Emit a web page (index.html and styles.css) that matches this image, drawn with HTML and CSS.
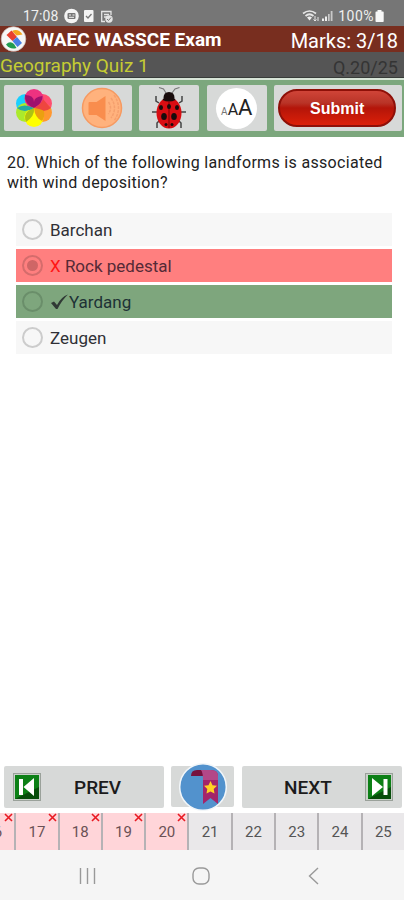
FILE: index.html
```html
<!DOCTYPE html>
<html lang="en">
<head>
<meta charset="utf-8">
<title>WAEC WASSCE Exam</title>
<link rel="stylesheet" href="styles.css">
</head>
<body>
<div class="app">
  <div class="status">
    <span class="time">17:08</span>
    <svg class="status-icons" width="50" height="16" viewBox="0 0 50 16">
      <circle cx="7.500" cy="8" r="7.300" fill="#f4f4f4"/><rect x="3.500" y="5" width="8" height="6" rx="1" fill="#777"/><path d="M5 7h2M8.500 7h2M5 9.300h5" stroke="#f4f4f4"/>
      <rect x="20" y="2" width="9.500" height="12" rx="1" fill="#f4f4f4"/><path d="M22 8l2 2 3.500-4" fill="none" stroke="#777" stroke-width="1.300"/>
      <path d="M47 7V3.500H37.700v10H41M40 6.500h5M40 9h3" fill="none" stroke="#e4e4e4" stroke-width="1.300"/><circle cx="45" cy="11" r="3.700" fill="#e4e4e4"/><path d="M43 11l1.500 1.500 2.500-3" fill="none" stroke="#777"/>
    </svg>
    <svg class="signal" width="32" height="14" viewBox="0 0 32 14">
      <path d="M1 4.500Q7.500-.5 14 4.500M3.500 7Q7.500 3.500 11.500 7" fill="none" stroke="#e6e6e6" stroke-width="1.700"/><path d="M5 8.500Q7.500 6.500 10 8.500L7.500 11.500z" fill="#eee"/><path d="M13 7v5M11.500 10.500l1.500 1.500 1.500-1.500M16 12V8" fill="none" stroke="#e6e6e6"/>
      <path d="M20 12v-2.500h2V12zM23 12V7.500h2V12z" fill="#eee"/><path d="M26 12V5h1.700v7zM28.700 12V2h1.800v10z" fill="#c8c8c8"/>
    </svg>
    <span class="pct">100%</span>
    <svg width="9" height="14" viewBox="0 0 9 14"><path d="M2.500 1h4v1.500H8q.7 0 .7.700v9q0 .8-.7.800H1.300q-.8 0-.8-.8v-9q0-.7.800-.7h1.200z" fill="#f7f7f7"/></svg>
  </div>
  <div class="title">
    <svg width="27" height="26" viewBox="0 0 27 26">
      <circle cx="13.500" cy="13" r="12.300" fill="#f7f7f5" stroke="#c9bdb8" stroke-width=".7"/>
      <path d="M12 5Q18 2 22.500 8.500L16.500 9.500z" fill="#f6a51c"/><path d="M6.500 9L11.500 4.500 17 11 12.500 15z" fill="#e8402e"/>
      <path d="M12.500 15L17 11 22 17 17.500 21z" fill="#477fe4"/><path d="M6 18.500Q10 14.500 14 18L16.500 22Q10 24 6 18.500z" fill="#219c50"/>
    </svg>
    <span class="app-name">WAEC WASSCE Exam</span>
    <span class="marks">Marks: 3/18</span>
  </div>
  <div class="subtitle"><span class="quiz">Geography Quiz 1</span><span class="count">Q.20/25</span></div>
  <div class="toolbar">
    <button class="tool">
      <svg width="40" height="42" viewBox="0 0 40 42">
        <circle cx="11.500" cy="16.500" r="9.500" fill="#19cfff"/><circle cx="28.500" cy="16.500" r="9.500" fill="#ff4f70"/><circle cx="28.500" cy="25.500" r="9.500" fill="#ff9830"/><circle cx="11.500" cy="25.500" r="9.500" fill="#abea2c"/><circle cx="20" cy="30.500" r="9.500" fill="#ffff00"/><circle cx="20" cy="11.500" r="9.500" fill="#ee3280"/>
        <path d="M20 21Q10 17 11 8 20 8 20 15 20 10 28.500 9 29 16 20 21z" fill="#9f116d"/><path d="M20 21Q28 17 29 12 34 18 37 21 30 27 20 21z" fill="#ee4640"/><path d="M20 21Q27 22 30 24 31 30 28 34 21 31 20 21z" fill="#eba010"/><path d="M20 21Q21 29 12 35 8 25 20 21z" fill="#aec312"/><path d="M20 21Q10 27 3 21 10 16 20 21z" fill="#24a8a2"/>
      </svg>
    </button>
    <button class="tool">
      <svg width="42" height="42" viewBox="0 0 42 42"><circle cx="21" cy="21" r="19.500" fill="#ffb27d" stroke="#f69a61" stroke-width="1.500"/><path d="M8.500 15h7l9-6v25l-9-6h-7q-1 0-1-1V16q0-1 1-1z" fill="#f98d4d"/><path d="M27.500 15q4 6 0 12M30 11q7 10 0 20M33 8q9 13 0 26" fill="none" stroke="#f5a06e" stroke-width="1.500" stroke-dasharray="3 1"/></svg>
    </button>
    <button class="tool">
      <svg width="36" height="44" viewBox="0 0 36 44">
        <path d="M15 7L12.500 3 8 1.500M21 7l3-4 4.500-1.500" fill="none" stroke="#777" stroke-width="1.100"/><path d="M8 17l-3-2V10M28 17l3-2V10M7 26H1M29 26h6M9 34l-3 3v5M27 34l3 3v5" fill="none" stroke="#444" stroke-width="1.500"/>
        <path d="M12.500 12Q12.500 6 18 6T23.500 12z" fill="#180c0c"/><ellipse cx="18" cy="27" rx="12.500" ry="15.500" fill="#d90d12"/><path d="M11.500 14Q13 10.500 18 10.500t6.500 3.500Q18 17 11.500 14z" fill="#180c0c"/>
        <path d="M18 16v26" stroke="#790000"/><g fill="#180c0c"><ellipse cx="18" cy="20.500" rx="2" ry="2.500"/><ellipse cx="10" cy="21.500" rx="2" ry="2.500"/><ellipse cx="26" cy="21.500" rx="2" ry="2.500"/><ellipse cx="13" cy="30.500" rx="2.800" ry="3.500"/><ellipse cx="23" cy="30.500" rx="2.800" ry="3.500"/><circle cx="15" cy="38.500" r="1.500"/><circle cx="21" cy="38.500" r="1.500"/></g>
      </svg>
    </button>
    <button class="tool"><span class="font-size"><span class="a1">A</span><span class="a2">A</span><span class="a3">A</span></span></button>
    <button class="tool wide"><span class="submit">Submit</span></button>
  </div>
  <main>
    <p class="question">20. Which of the following landforms is associated<br>with wind deposition?</p>
    <div class="options">
      <div class="option"><i class="radio"></i><span>Barchan</span></div>
      <div class="option wrong"><i class="radio on"></i><span><span class="x">X</span> Rock pedestal</span></div>
      <div class="option right"><i class="radio"></i><svg width="19" height="16" viewBox="0 0 19 16"><path d="M1 9l3-1.500 3 3.500Q11 3 18 .5 12 6 7.500 15H6z" fill="#303a35"/></svg><span>Yardang</span></div>
      <div class="option"><i class="radio"></i><span>Zeugen</span></div>
    </div>
  </main>
  <div class="pager">
    <button class="page-btn prev">
      <svg width="28" height="28" viewBox="0 0 28 28"><rect x=".5" y=".5" width="27" height="27" fill="#c9d1c9" stroke="#9aa19a"/><rect x="2" y="2" width="24" height="24" fill="#0c8016"/><path d="M2 26L26 14v12z" fill="#064d0a"/><path d="M6 6h4v16H6zM21 5v18L10.500 14z" fill="#fff"/></svg>
      <span>PREV</span>
    </button>
    <button class="page-btn mark">
      <svg width="48" height="48" viewBox="0 0 48 48"><circle cx="24" cy="24" r="23.300" fill="#5292cd" stroke="#f2f6f9" stroke-width="1.500"/><path d="M12 13q0-6 6-6H31q-7 1-7 6z" fill="#76113f"/><path d="M22 7h10q7 0 7 6v28l-7.500-6L24 41V14q0-6-2-7z" fill="#a3256a"/><path d="M22 7h10q7 0 7 6v4H24q0-8-2-10z" fill="#b34888"/><path d="M31.500 18l2 4.200 4.500.6-3.300 3.200.8 4.600-4-2.200-4 2.200.8-4.600-3.300-3.200 4.500-.6z" fill="#ffd124"/></svg>
    </button>
    <button class="page-btn next">
      <span>NEXT</span>
      <svg width="28" height="28" viewBox="0 0 28 28"><rect x=".5" y=".5" width="27" height="27" fill="#c9d1c9" stroke="#9aa19a"/><rect x="3" y="2" width="23" height="24" fill="#0c8016"/><path d="M3 26L26 14v12z" fill="#064d0a"/><path d="M18.500 6h4v16h-4zM7 5v18l11-9z" fill="#fff"/></svg>
    </button>
  </div>
  <div class="strip">
    <div class="cell bad first"><span>16</span><svg class="cross" width="9" height="9" viewBox="0 0 9 9"><path d="M1 1l7 7M8 1L1 8"/></svg></div>
    <div class="cell bad"><span>17</span><svg class="cross" width="9" height="9" viewBox="0 0 9 9"><path d="M1 1l7 7M8 1L1 8"/></svg></div>
    <div class="cell bad"><span>18</span><svg class="cross" width="9" height="9" viewBox="0 0 9 9"><path d="M1 1l7 7M8 1L1 8"/></svg></div>
    <div class="cell bad"><span>19</span><svg class="cross" width="9" height="9" viewBox="0 0 9 9"><path d="M1 1l7 7M8 1L1 8"/></svg></div>
    <div class="cell bad"><span>20</span><svg class="cross" width="9" height="9" viewBox="0 0 9 9"><path d="M1 1l7 7M8 1L1 8"/></svg></div>
    <div class="cell"><span>21</span></div>
    <div class="cell"><span>22</span></div>
    <div class="cell"><span>23</span></div>
    <div class="cell"><span>24</span></div>
    <div class="cell"><span>25</span></div>
  </div>
  <nav>
    <svg width="18" height="18" viewBox="0 0 18 18"><path d="M1.500 1v16M8.500 1v16M15.500 1v16" stroke="#999" stroke-width="1.400"/></svg>
    <svg width="18" height="18" viewBox="0 0 18 18"><rect x="1" y="1" width="16" height="16" rx="6" fill="none" stroke="#999" stroke-width="1.400"/></svg>
    <svg width="18" height="18" viewBox="0 0 18 18"><path d="M13 1L4.500 9l8.500 8" fill="none" stroke="#999" stroke-width="1.400"/></svg>
  </nav>
</div>
</body>
</html>
```
FILE: styles.css
```css
* { box-sizing: border-box; }
body { margin: 0; background: #fff; font-family: Roboto, sans-serif; color: #222; }
button { border: 0; padding: 0; margin: 0; font: inherit; color: inherit; background: #d7d9d8; }
svg { display: block; flex: none; }
.app { width: 404px; height: 900px; display: flex; flex-direction: column; overflow: hidden; }
.status { height: 26px; flex: none; background: #767676; color: #efefef; display: flex; align-items: center; padding: 5px 20px 0 23px; font-size: 14px; }
.time { width: 41px; letter-spacing: .1px; }
.signal { margin-left: auto; margin-right: 4px; }
.pct { margin-right: 1px; letter-spacing: .5px; }
.title { height: 26px; flex: none; background: #782e1f; color: #fff; display: flex; align-items: center; padding-right: 6px; }
.app-name { margin-left: 10.500px; font-size: 19px; font-weight: 700; line-height: 26px; padding-top: 2px; white-space: nowrap; }
.marks { margin-left: auto; font-size: 20px; padding-top: 3px; }
.subtitle { height: 26px; flex: none; background: #555; border-bottom: 1px solid #383c39; display: flex; justify-content: space-between; align-items: flex-start; padding-right: 6px; line-height: 28px; overflow: hidden; }
.quiz { color: #c5cc33; font-size: 19px; }
.count { color: #343434; font-size: 18px; line-height: 31px; }
.toolbar { height: 59px; flex: none; background: #7ca77d; border-top: 2px solid #d7e4d7; display: flex; gap: 7.600px; padding: 5px 2px 7px 4px; }
.tool { width: 60px; height: 46px; flex: none; border-radius: 2px; display: flex; align-items: center; justify-content: center; }
.tool.wide { flex: 1; padding-right: 2px; }
.font-size { width: 41px; height: 41px; border-radius: 50%; background: #fff; display: flex; align-items: baseline; justify-content: center; line-height: 40px; color: #222; }
.a1 { font-size: 10px; color: #777; }
.a2 { font-size: 16px; }
.a3 { font-size: 22px; }
.submit { width: 118px; height: 38px; border-radius: 19px; border: 2px solid #8e1008; background: linear-gradient(#d04438 0, #b93427 35%, #b41509 50%, #dc2009 100%); color: #fff; font: 700 16px/35px "Liberation Sans", sans-serif; text-align: center; }
main { flex: 1; padding-top: 16px; }
.question { margin: 0; padding-left: 7px; font-size: 16px; line-height: 20px; letter-spacing: .32px; white-space: nowrap; }
.options { margin: 20px 12px 0 16px; display: flex; flex-direction: column; gap: 3px; }
.option { height: 33px; background: #f7f7f7; display: flex; align-items: center; padding-left: 6px; font-size: 17px; color: #303036; }
.radio { width: 21px; height: 21px; border: 2px solid #ccc; border-radius: 50%; margin-right: 7px; flex: none; display: flex; align-items: center; justify-content: center; }
.wrong { background: #ff7f7f; color: #552a36; }
.wrong .radio { border-color: #d56c6c; }
.radio.on::after { content: ""; width: 11px; height: 11px; border-radius: 50%; background: #cf6666; }
.x { color: #ff1515; }
.right { background: #7ea67d; color: #1d3235; }
.right .radio { border-color: #6a8e6a; }
.pager { height: 47px; flex: none; display: flex; padding: 0 2px 0 4px; }
.page-btn { height: 42px; border-radius: 2px; display: flex; align-items: center; font-size: 19px; font-weight: 500; color: #1b1b1b; }
.prev { width: 160px; padding-left: 9px; }
.prev span { margin-left: 33px; }
.mark { width: 63px; margin: 0 8px 0 7px; justify-content: center; height: 41px; }
.mark svg { margin: -4px 0; }
.next { flex: 1; padding-left: 42px; padding-right: 9px; justify-content: space-between; }
.strip { height: 37px; flex: none; display: flex; margin-left: -27px; }
.cell { width: 43.300px; flex: none; background: #eae8ea; border-right: 2px solid #b5b2b5; display: flex; align-items: center; justify-content: center; font-size: 15px; color: #555; position: relative; }
.cell.bad { background: #ffd5d9; color: #6a5155; }
.cross { position: absolute; right: 1px; top: 0; fill: none; stroke: #e81922; stroke-width: 1.600px; }
nav { height: 50px; flex: none; background: #f5f5f5; display: flex; align-items: center; justify-content: space-between; padding: 1px 81px 0 79px; }
```
